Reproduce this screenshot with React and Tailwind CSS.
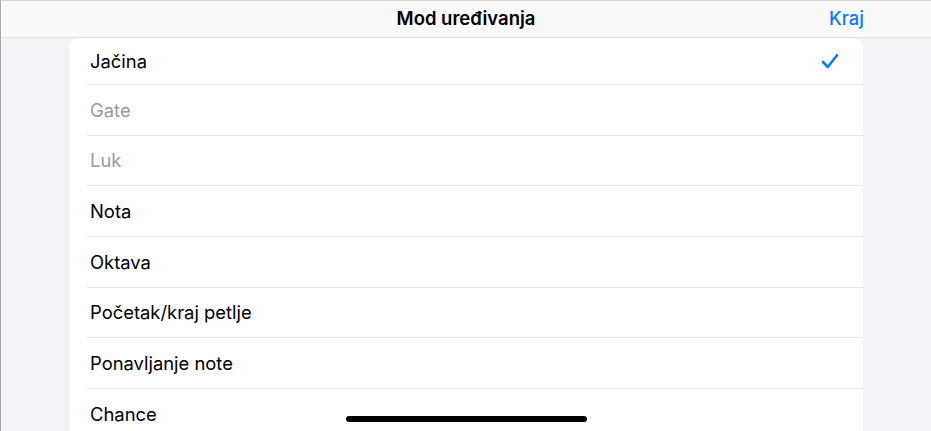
const rows = [
  { label: "Jačina", checked: true },
  { label: "Gate", disabled: true },
  { label: "Luk", disabled: true },
  { label: "Nota" },
  { label: "Oktava" },
  { label: "Početak/kraj petlje" },
  { label: "Ponavljanje note" },
  { label: "Chance" },
];

const Check = () => (
  <svg width="18" height="17" viewBox="0 0 18 17" fill="none">
    <path
      d="M2 9 L6.8 14 L16 2.2"
      stroke="#0a7aff"
      strokeWidth="2.6"
      strokeLinecap="round"
      strokeLinejoin="round"
    />
  </svg>
);

const App = () => {
  return (
    <div className="relative w-[931px] h-[431px] overflow-hidden bg-[#f2f2f7] border-l border-t border-l-[#a9a9ad] border-t-[#d4d4d8] font-['Inter','Liberation_Sans',sans-serif]">
      <div className="h-[37px] bg-[#f9f9f9] border-b border-[#e2e2e6] grid grid-cols-[1fr_auto_1fr] items-center px-[67px]">
        <div></div>
        <h1 className="text-[18.5px] font-semibold text-black">
          Mod uređivanja
        </h1>
        <div className="flex justify-end">
          <span className="text-[18.5px] font-medium text-[#0a7aff]">Kraj</span>
        </div>
      </div>

      <div className="mx-[68px] bg-white rounded-t-[10px] overflow-hidden">
        {rows.map((row, i) => (
          <div
            key={row.label}
            className={i === 0 ? "h-[46px] pl-[18px]" : "h-[50.7px] pl-[18px]"}
          >
            <div
              className={
                i === 0
                  ? "h-full flex items-center pl-[3px] pr-[24px]"
                  : "h-full flex items-center pl-[3px] pr-[24px] border-t border-[#e6e6ea]"
              }
            >
              <span
                className={
                  row.disabled
                    ? "flex-1 text-[18.4px] text-[#9a9a9e] pt-px"
                    : "flex-1 text-[18.4px] text-black pt-px"
                }
              >
                {row.label}
              </span>
              {row.checked && <Check />}
            </div>
          </div>
        ))}
      </div>

      <div className="absolute left-[345px] top-[415px] w-[241px] h-[6px] rounded-full bg-black"></div>
    </div>
  );
};

export default App;
